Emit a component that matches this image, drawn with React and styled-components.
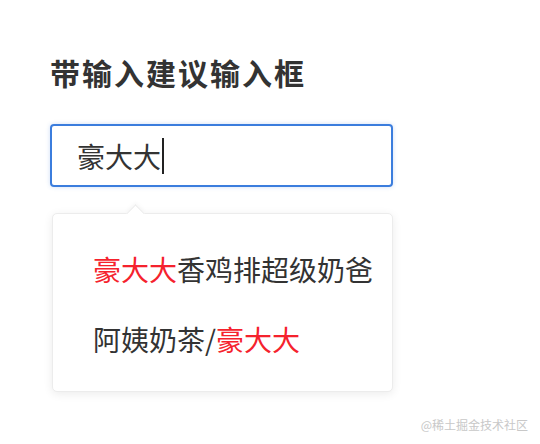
import React from 'react';
import styled, { createGlobalStyle } from 'styled-components';

const GlobalStyle = createGlobalStyle`
  html, body {
    margin: 0;
    padding: 0;
    background: #ffffff;
    font-family: "Noto Sans CJK SC", "Noto Sans", sans-serif;
  }
`;

const Page = styled.div`
  position: relative;
  width: 540px;
  height: 444px;
  padding: 52px 0 0 50px;
  box-sizing: border-box;
  overflow: hidden;
`;

const Title = styled.h2`
  margin: 0 0 31px;
  font-size: 30px;
  line-height: 41px;
  font-weight: 700;
  color: #333333;
  letter-spacing: 2px;
`;

const Field = styled.div`
  width: 343px;
`;

const InputBox = styled.div`
  height: 63px;
  box-sizing: border-box;
  border: 2px solid #3b7ddd;
  border-radius: 4px;
  padding-left: 25px;
  display: flex;
  align-items: center;
  font-size: 28px;
  color: #333333;
  box-shadow: 0 0 4px rgba(59, 125, 221, 0.25);
`;

const Caret = styled.span`
  display: inline-block;
  width: 1.5px;
  height: 36px;
  background: #222;
  margin-left: 1px;
`;

const Dropdown = styled.div`
  position: relative;
  margin: 26px 0 0 2px;
  width: 341px;
  box-sizing: border-box;
  padding: 20px 0 17px 40px;
  background: #ffffff;
  border: 1px solid #ececec;
  border-radius: 5px;
  box-shadow: 0 2px 10px rgba(0, 0, 0, 0.08);
`;

const Arrow = styled.div`
  position: absolute;
  top: -7px;
  left: 76px;
  width: 12px;
  height: 12px;
  background: #ffffff;
  border-left: 1px solid #ececec;
  border-top: 1px solid #ececec;
  transform: rotate(45deg);
  box-shadow: -2px -2px 4px rgba(0, 0, 0, 0.03);
`;

const Item = styled.div`
  height: 70px;
  display: flex;
  align-items: center;
  font-size: 28px;
  color: #333333;
  white-space: nowrap;
`;

const Hit = styled.span`
  color: #f5222d;
`;

const Watermark = styled.div`
  position: absolute;
  right: 12px;
  bottom: 11px;
  font-size: 12px;
  color: #c8c8c8;
`;

export default function App() {
  return (
    <>
      <GlobalStyle />
      <Page>
        <Title>带输入建议输入框</Title>
        <Field>
          <InputBox>
            豪大大<Caret />
          </InputBox>
          <Dropdown>
            <Arrow />
            <Item>
              <Hit>豪大大</Hit>香鸡排超级奶爸
            </Item>
            <Item>
              阿姨奶茶/<Hit>豪大大</Hit>
            </Item>
          </Dropdown>
        </Field>
        <Watermark>@稀土掘金技术社区</Watermark>
      </Page>
    </>
  );
}
